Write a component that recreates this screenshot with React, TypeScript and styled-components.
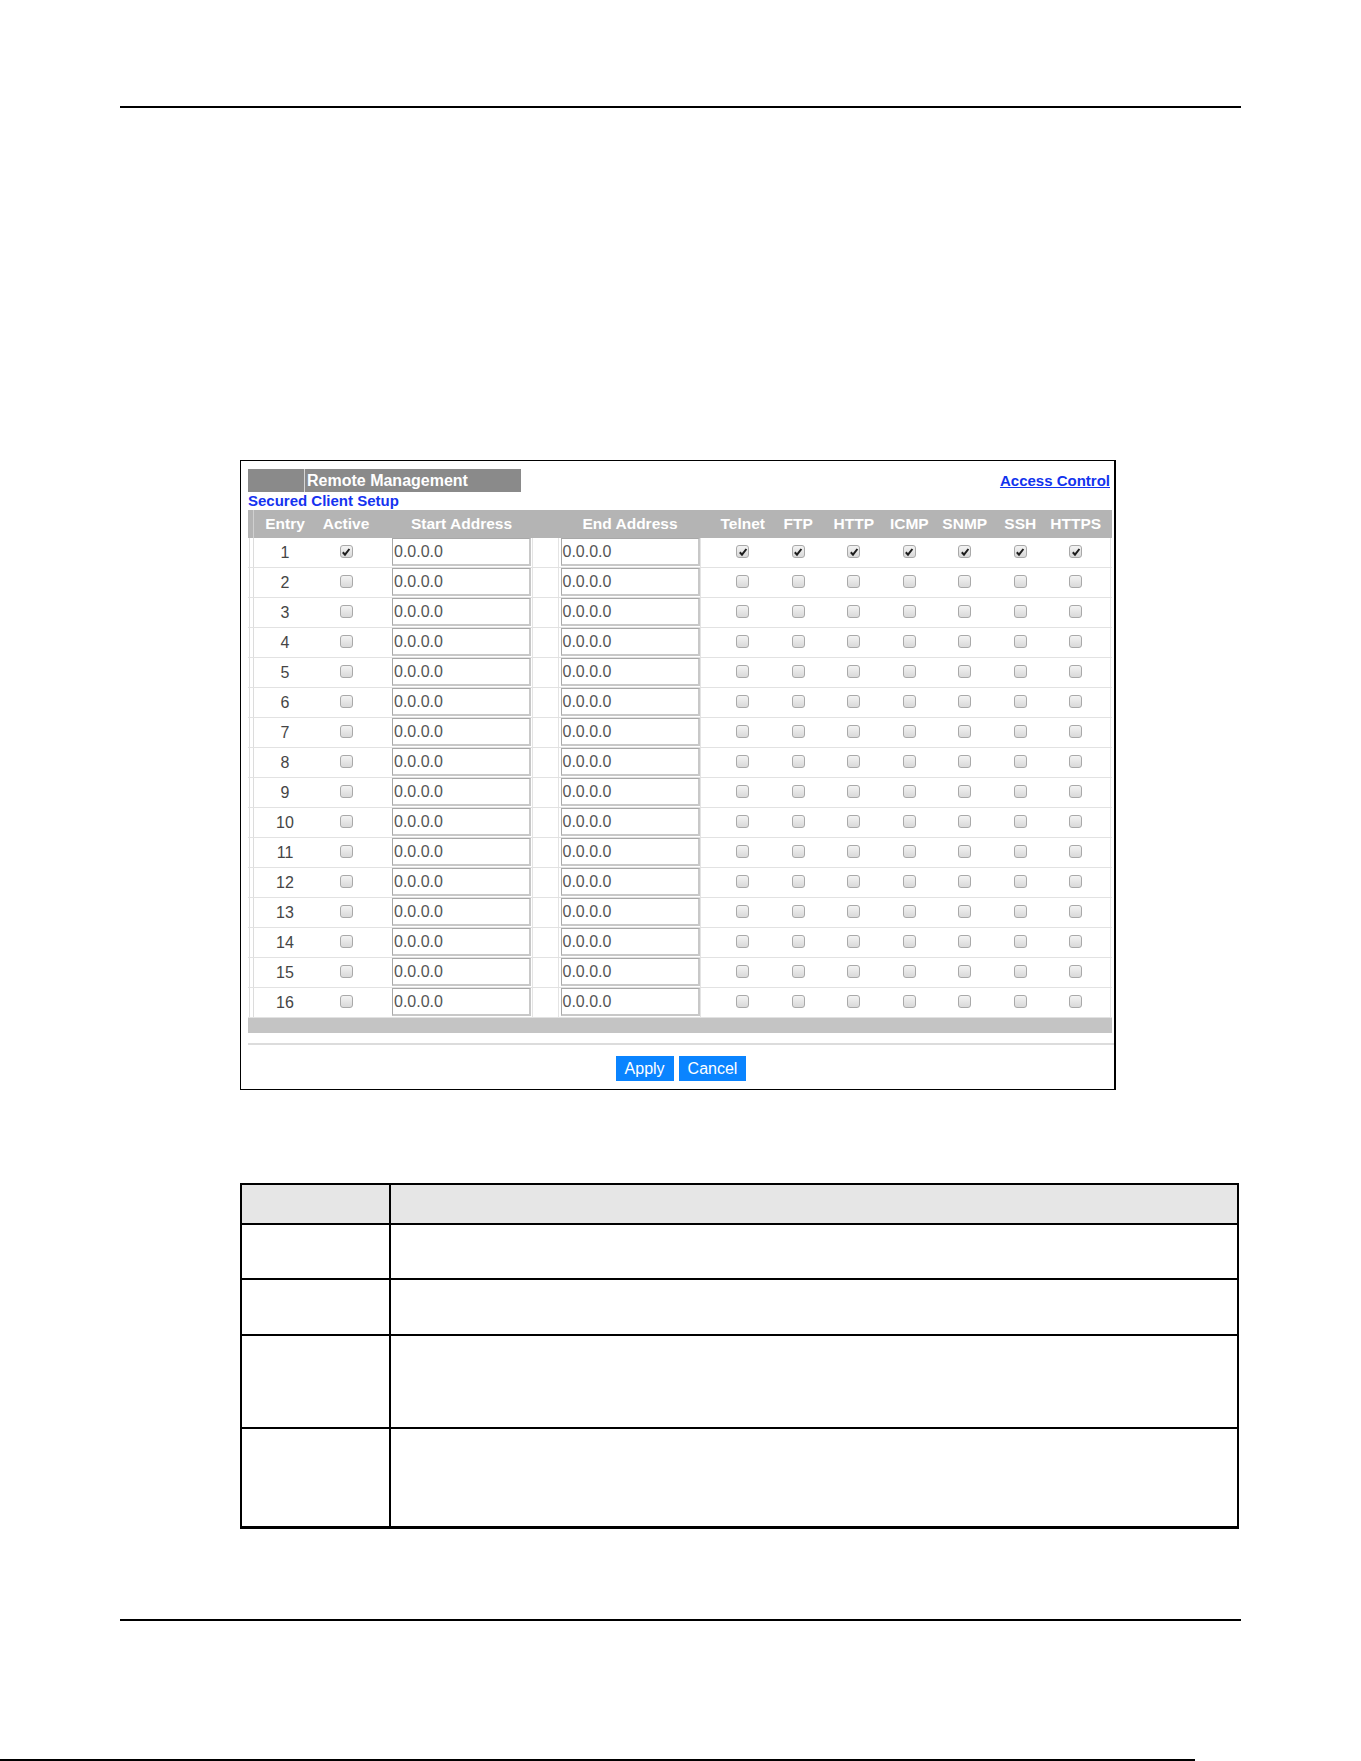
import { FC } from "react";
import styled, { createGlobalStyle } from "styled-components";

const GlobalStyle = createGlobalStyle`
	html, body {
		margin: 0;
		padding: 0;
		background: #fff;
	}
	body {
		font-family: "Liberation Sans", Arial, sans-serif;
	}
`;

const PROTOCOLS = ["Telnet", "FTP", "HTTP", "ICMP", "SNMP", "SSH", "HTTPS"];
const ENTRIES = Array.from({ length: 16 }, (_, i) => i + 1);

const GRID = "6px 62px 60px 15px 141px 28px 140px 15px repeat(7, 55.5px) 8.5px";

const Page = styled.div`
	position: relative;
	width: 1361px;
	height: 1761px;
	display: flex;
	flex-direction: column;
	overflow: hidden;
`;

const Rule = styled.div<{ top: number; left: number; width: number }>`
	margin-top: ${({ top }) => top}px;
	margin-left: ${({ left }) => left}px;
	width: ${({ width }) => width}px;
	height: 2px;
	background: #000;
	flex-shrink: 0;
`;

const Panel = styled.div`
	margin-top: 352px;
	margin-left: 240px;
	width: 864px;
	height: 627px;
	border: 1px solid #000;
	border-right-width: 2px;
	padding: 8px 2px 0 7px;
	display: flex;
	flex-direction: column;
`;

const TitleRow = styled.div`
	display: flex;
	justify-content: space-between;
	align-items: flex-start;
	height: 23px;
`;

const TitleBar = styled.div`
	display: flex;
	width: 273px;
	height: 23px;
	background: #8a8a8a;
`;

const TitleStub = styled.div`
	width: 56px;
	border-right: 1px solid #d6d6d6;
`;

const TitleText = styled.div`
	padding-left: 2px;
	color: #fff;
	font-weight: bold;
	font-size: 16px;
	line-height: 23px;
`;

const Link = styled.a`
	margin-top: 3px;
	margin-right: 2px;
	color: #1133ee;
	font-weight: bold;
	font-size: 15px;
	text-decoration: underline;
`;

const SubTitle = styled.div`
	color: #1533f0;
	font-weight: bold;
	font-size: 15px;
	line-height: 18px;
`;

const Grid = styled.div`
	display: grid;
	grid-template-columns: ${GRID};
	width: 864px;
`;

const HeadRow = styled(Grid)`
	height: 28px;
	background: #b4b4b4;
`;

const HeadCell = styled.div<{ edge?: boolean }>`
	display: flex;
	align-items: center;
	justify-content: center;
	color: #fff;
	font-weight: bold;
	font-size: 15.5px;
	white-space: nowrap;
	${({ edge }) => edge && "border-right: 1px solid #d0d0d0;"}
`;

const Row = styled(Grid)`
	height: 30px;
	background: #fff;
	border-bottom: 1px solid #e2e2e2;
	box-sizing: border-box;
`;

const Cell = styled.div<{ lines?: string }>`
	display: flex;
	align-items: center;
	justify-content: center;
	${({ lines }) => lines}
`;

const EntryNo = styled(Cell)`
	color: #454545;
	font-size: 16px;
`;

const AddressBox = styled.div`
	width: 139px;
	height: 28px;
	margin-top: -1px;
	box-sizing: border-box;
	border: 1px solid #a8a8a8;
	border-right: 2px solid #c8c8c8;
	border-bottom: 2px solid #c8c8c8;
	padding-left: 1px;
	color: #555;
	font-size: 16px;
	line-height: 25px;
	text-align: left;
	background: #fff;
`;

const Box = styled.span`
	display: inline-flex;
	align-items: center;
	justify-content: center;
	width: 13px;
	height: 13px;
	margin-top: -2px;
	box-sizing: border-box;
	border: 1px solid #a9a9a9;
	border-radius: 3px;
	background: linear-gradient(#f3f3f3, #d9d9d9);
`;

const FootBar = styled.div`
	width: 864px;
	height: 15px;
	background: #c4c4c4;
`;

const Divider = styled.div`
	margin-top: 10px;
	width: 866px;
	height: 2px;
	background: #dcdcdc;
`;

const Buttons = styled.div`
	display: flex;
	justify-content: center;
	gap: 5px;
	margin-top: 11px;
	padding-left: 2px;
`;

const Button = styled.button`
	height: 25px;
	padding: 0 9px;
	border: none;
	background: #0a84ff;
	color: #fff;
	font-family: "Liberation Sans", Arial, sans-serif;
	font-size: 16px;
	cursor: pointer;
`;

const DescTable = styled.div`
	margin-top: 93px;
	margin-left: 240px;
	width: 999px;
	box-sizing: border-box;
	border: 2px solid #000;
	border-bottom-width: 1px;
	display: flex;
	flex-direction: column;
`;

const DescRow = styled.div<{ h: number; head?: boolean }>`
	display: grid;
	grid-template-columns: 149px 1fr;
	height: ${({ h }) => h}px;
	box-sizing: border-box;
	border-bottom: 2px solid #000;
	background: ${({ head }) => (head ? "#e6e6e6" : "#fff")};
`;

const DescCell = styled.div`
	border-right: 2px solid #000;
`;

const Check: FC<{ on?: boolean }> = ({ on }) => (
	<Box>
		{on && (
			<svg width="10" height="10" viewBox="0 0 10 10">
				<path d="M1.8 5.2 L4 7.6 L8.4 2" fill="none" stroke="#1e1e1e" strokeWidth="2" />
			</svg>
		)}
	</Box>
);

const App: FC = () => (
	<Page>
		<GlobalStyle />
		<Rule top={106} left={120} width={1121} />

		<Panel>
			<TitleRow>
				<TitleBar>
					<TitleStub />
					<TitleText>Remote Management</TitleText>
				</TitleBar>
				<Link href="#">Access Control</Link>
			</TitleRow>
			<SubTitle>Secured Client Setup</SubTitle>

			<HeadRow>
				<HeadCell edge />
				<HeadCell>Entry</HeadCell>
				<HeadCell>Active</HeadCell>
				<HeadCell />
				<HeadCell>Start Address</HeadCell>
				<HeadCell />
				<HeadCell>End Address</HeadCell>
				<HeadCell />
				{PROTOCOLS.map((p) => (
					<HeadCell key={p}>{p}</HeadCell>
				))}
				<HeadCell />
			</HeadRow>

			{ENTRIES.map((n) => (
				<Row key={n}>
					<Cell lines="border-left: 1px solid #dcdcdc; border-right: 1px solid #dcdcdc; margin-left: 1px;" />
					<EntryNo>{n}</EntryNo>
					<Cell>
						<Check on={n === 1} />
					</Cell>
					<Cell />
					<Cell>
						<AddressBox>0.0.0.0</AddressBox>
					</Cell>
					<Cell lines="border-left: 1px solid #e4e4e4; border-right: 1px solid #e4e4e4; margin-right: 1px;" />
					<Cell>
						<AddressBox>0.0.0.0</AddressBox>
					</Cell>
					<Cell lines="border-left: 1px solid #e4e4e4;" />
					{PROTOCOLS.map((p) => (
						<Cell key={p}>
							<Check on={n === 1} />
						</Cell>
					))}
					<Cell lines="border-right: 1px solid #e4e4e4; margin-right: 1px;" />
				</Row>
			))}

			<FootBar />
			<Divider />
			<Buttons>
				<Button>Apply</Button>
				<Button>Cancel</Button>
			</Buttons>
		</Panel>

		<DescTable>
			<DescRow h={40} head>
				<DescCell />
			</DescRow>
			<DescRow h={55}>
				<DescCell />
			</DescRow>
			<DescRow h={56}>
				<DescCell />
			</DescRow>
			<DescRow h={93}>
				<DescCell />
			</DescRow>
			<DescRow h={99}>
				<DescCell />
			</DescRow>
		</DescTable>

		<Rule top={90} left={120} width={1121} />
		<Rule top={138} left={0} width={1195} />
	</Page>
);

export default App;
